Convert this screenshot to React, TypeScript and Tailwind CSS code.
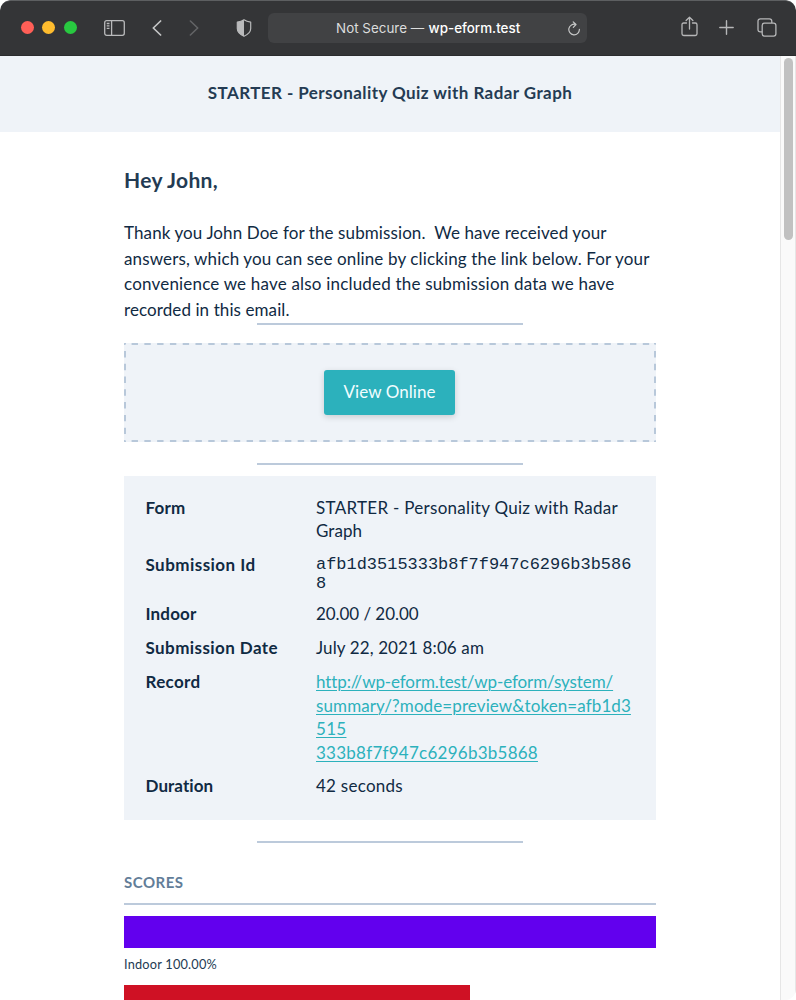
import type { ReactNode } from "react";

function Line({ children, className = "" }: { children: ReactNode; className?: string }) {
  return <span className={`block whitespace-pre ${className}`}>{children}</span>;
}

function Toolbar() {
  return (
    <header className="flex h-14 shrink-0 items-center rounded-t-[10px] border-t border-[#5d5f61] bg-[#343537] pr-[19.5px] pb-[2px] pl-[21px] shadow-[inset_0_-1px_0_#2b2c2e]">
      <div className="flex gap-2">
        <span className="size-[13px] rounded-full bg-[#ff5f57]" />
        <span className="size-[13px] rounded-full bg-[#febc2e] ml-[0.3px]" />
        <span className="size-[13px] rounded-full bg-[#28c840] ml-[0.3px]" />
      </div>
      <svg className="ml-[27px] h-4 w-[21px]" viewBox="0 0 21 16" fill="none" stroke="#b9babb" strokeWidth="1.3">
        <rect x="0.7" y="0.7" width="19.6" height="14.6" rx="2" />
        <path d="M7.6 .7v14.6M2.7 3.5h2.8M2.7 5.9h2.8M2.7 8.3h2.8" />
      </svg>
      <svg className="ml-[27px] h-4 w-[10px]" viewBox="0 0 10 16" fill="none" stroke="#c4c5c6" strokeWidth="1.7" strokeLinecap="round" strokeLinejoin="round">
        <path d="M8.6 1 1.3 8l7.3 7" />
      </svg>
      <svg className="ml-[27.500px] h-4 w-[10px]" viewBox="0 0 10 16" fill="none" stroke="#636466" strokeWidth="1.6" strokeLinecap="round" strokeLinejoin="round">
        <path d="M1.4 1 8.7 8l-7.3 7" />
      </svg>
      <svg className="ml-[37px] h-[18px] w-4" viewBox="0 0 16 18" fill="none">
        <path d="M8 .8C6.200 2.100 3.600 2.900 1.300 3.200v6.300C1.300 13.400 4.500 15.700 8 17.300c3.500-1.600 6.700-3.900 6.700-7.800V3.200C12.400 2.900 9.800 2.100 8 .8Z" stroke="#b9babb" strokeWidth="1.2" strokeLinejoin="round" />
        <path d="M8 .8C6.200 2.100 3.600 2.900 1.300 3.200v6.300C1.300 13.400 4.500 15.700 8 17.300Z" fill="#b9babb" />
      </svg>
      <div className="ml-4 flex h-[30px] w-[319px] items-center rounded-[6px] bg-[#414244] pt-px pr-[7.500px] pl-[68px] font-['Inter',sans-serif] text-[13.4px]">
        <span className="whitespace-pre text-[#dcdddd]">Not Secure —</span>
        <span className="ml-[4.500px] font-medium text-white">wp-eform.test</span>
        <svg className="ml-auto h-[15px] w-3" viewBox="0 0 12 15" fill="none" stroke="#c9caca" strokeWidth="1.15" strokeLinecap="round" strokeLinejoin="round">
          <path d="M7.800 3.500A5.300 5.300 0 1 0 11.400 8.300M5.200 .8 8 3.500 5.300 6.300" />
        </svg>
      </div>
      <svg className="ml-[93.500px] h-[21px] w-[17px] -mt-[2px]" viewBox="0 0 17 21" fill="none" stroke="#b6b7b8" strokeWidth="1.3" strokeLinecap="round" strokeLinejoin="round">
        <path d="M5.500 7H2.700C1.600 7 1 7.600 1 8.700v9.100c0 1.100.6 1.700 1.700 1.700h11.600c1.100 0 1.700-.6 1.700-1.700V8.700C16 7.600 15.400 7 14.300 7h-2.800M8.500 13V1.300M5.100 4.500 8.500 1.200l3.400 3.300" />
      </svg>
      <svg className="ml-[21.500px] size-[15px] -mt-px" viewBox="0 0 15 15" fill="none" stroke="#b6b7b8" strokeWidth="1.4" strokeLinecap="round">
        <path d="M7.500 .8v13.400M.8 7.500h13.400" />
      </svg>
      <svg className="ml-auto h-[19px] w-5 -mt-px" viewBox="0 0 20 19" fill="none" stroke="#b6b7b8" strokeWidth="1.3">
        <path d="M5.200 13.800H3.400C1.800 13.800 1 13 1 11.400V3.200C1 1.700 1.800 .9 3.400 .9h9c1.600 0 2.400 .8 2.400 2.300v1.900" />
        <rect x="5.200" y="5.100" width="13.700" height="13" rx="2.300" />
      </svg>
    </header>
  );
}

function Divider() {
  return <div className="mx-auto h-0.5 w-[266px] bg-[#bccadb]" />;
}

function Row({ label, tracking, height, children }: { label: string; tracking: string; height: string; children: ReactNode }) {
  return (
    <div className={`flex pt-[5px] leading-[23.4px] ${height}`}>
      <div className={`w-[170.5px] shrink-0 font-bold whitespace-nowrap ${tracking}`}>{label}</div>
      <div>{children}</div>
    </div>
  );
}

export default function App() {
  return (
    <div className="h-[1000px] w-[796px] overflow-hidden bg-white">
      <div className="flex h-full flex-col overflow-hidden rounded-[11px] font-['Lato',sans-serif] text-[17px] text-[#102a43]">
        <Toolbar />
        <div className="flex min-h-0 flex-1">
          <main className="w-[780px] overflow-hidden">
            <h1 className="flex h-[76px] items-center justify-center bg-[#eff3f8] pb-0.5 font-bold tracking-[0.43px] text-[#243b53]">
              STARTER - Personality Quiz with Radar Graph
            </h1>
            <div className="ml-[124px] w-[532px]">
              <h2 className="pt-[34px] text-[21px] leading-7 font-bold tracking-[0.31px] text-[#243b53]">Hey John,</h2>
              <p className="mt-[26px] h-[103px] leading-[25.5px]">
                <Line className="tracking-[0.1px]">{"Thank you John Doe for the submission.\u00a0 We have received your"}</Line>
                <Line className="tracking-[0.134px]">answers, which you can see online by clicking the link below. For your</Line>
                <Line className="tracking-[0.192px]">convenience we have also included the submission data we have</Line>
                <Line className="tracking-[0.09px]">recorded in this email.</Line>
              </p>
              <Divider />
              <div className="relative mt-[18px] flex h-[99px] items-center justify-center bg-[#eff3f8] pr-px pb-px">
                <svg className="absolute inset-0 h-[99px] w-[532px]" viewBox="0 0 532 99" fill="none" stroke="#b8c8da" strokeWidth="2" strokeDasharray="6.400 6.380">
                  <path d="M0 1h532" strokeDashoffset="5.200" />
                  <path d="M0 98h532" strokeDashoffset="5.200" />
                  <path d="M1 0v99" strokeDashoffset="4.800" />
                  <path d="M531 0v99" strokeDashoffset="4.800" />
                </svg>
                <button className="h-[45px] w-[131px] rounded-[3px] bg-[#2cb1bc] pb-px tracking-[0.06px] text-[#f2fdff] shadow-[0_2px_6px_rgba(0,0,0,0.16)]">View Online</button>
              </div>
              <div className="mt-[21px]"><Divider /></div>
              <section className="mt-[11px] h-[344px] bg-[#eff3f8] pt-[15px] pl-[21.5px]">
                <Row label="Form" tracking="tracking-[0.2px]" height="h-[57.4px]">
                  <Line className="tracking-[0.29px]">STARTER - Personality Quiz with Radar</Line>
                  <Line className="tracking-[0.04px]">Graph</Line>
                </Row>
                <Row label="Submission Id" tracking="tracking-[0.45px]" height="h-[49px]">
                  <div className="pt-[2px] font-['Liberation_Mono',monospace] text-[16.97px] leading-[19px]">
                    <Line>afb1d3515333b8f7f947c6296b3b586</Line>
                    <Line>8</Line>
                  </div>
                </Row>
                <Row label="Indoor" tracking="tracking-[0.16px]" height="h-[34px]">
                  <Line className="tracking-[-0.06px]">20.00 / 20.00</Line>
                </Row>
                <Row label="Submission Date" tracking="tracking-[0.415px]" height="h-[34px]">
                  <Line className="tracking-[0.12px]">July 22, 2021 8:06 am</Line>
                </Row>
                <Row label="Record" tracking="tracking-[0.33px]" height="h-[104px]">
                  <a className="text-[#2cb1bc] underline decoration-1 underline-offset-2">
                    <Line className="tracking-[-0.11px]">http://wp-eform.test/wp-eform/system/</Line>
                    <Line className="tracking-[0.104px]">summary/?mode=preview&amp;token=afb1d3</Line>
                    <Line className="tracking-[0.3px]">515</Line>
                    <Line className="tracking-[0.25px]">333b8f7f947c6296b3b5868</Line>
                  </a>
                </Row>
                <Row label="Duration" tracking="tracking-[0.07px]" height="h-[34px]">
                  <Line className="tracking-[0.26px]">42 seconds</Line>
                </Row>
              </section>
              <div className="mt-[21px]"><Divider /></div>
              <h3 className="mt-[28px] border-b-2 border-[#bccadb] pb-[10px] text-[15px] leading-[22px] font-bold tracking-[0.49px] text-[#627d98]">SCORES</h3>
              <div className="mt-[10.5px] h-8 bg-[#6200ee]" />
              <p className="mt-[7px] text-[12.75px] leading-[19px] tracking-[0.21px] text-[#243b53]">Indoor 100.00%</p>
              <div className="mt-[11px] h-8 w-[346px] bg-[#cf1124]" />
            </div>
          </main>
          <aside className="flex-1 border-r border-l border-[#e6e6e6] bg-[#fafafa] pt-[2px] pl-[3px]">
            <div className="h-[182px] w-[9px] rounded-full bg-[#c1c1c1]" />
          </aside>
        </div>
      </div>
    </div>
  );
}
